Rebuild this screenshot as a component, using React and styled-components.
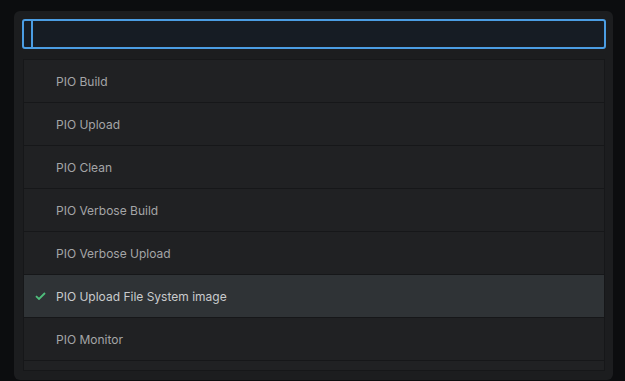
import styled, { createGlobalStyle } from "styled-components";

const GlobalStyle = createGlobalStyle`
  html, body {
    margin: 0;
    padding: 0;
    background: #0c0d0f;
    font-family: Inter, "Noto Sans", "Liberation Sans", sans-serif;
  }
`;

const Page = styled.div`
  width: 625px;
  height: 381px;
  padding: 11px 0 0 14px;
  box-sizing: border-box;
`;

const Panel = styled.div`
  width: 599px;
  height: 369px;
  box-sizing: border-box;
  background: #1c1d1f;
  border-radius: 6px;
  padding: 8px 7px 9px 8px;
  display: flex;
  flex-direction: column;
  gap: 10px;
`;

const SearchBox = styled.div`
  height: 30px;
  box-sizing: border-box;
  border: 2px solid #4b9de3;
  border-radius: 3px;
  background: #161c24;
  display: flex;
  align-items: stretch;
  padding: 0 0 0 7px;
`;

const Caret = styled.span`
  width: 2px;
  background: #4b9de3;
`;

const List = styled.ul`
  list-style: none;
  margin: 0 1px 0 1px;
  padding: 0;
  flex: 1;
  overflow: hidden;
  border: 1px solid #161719;
  border-top-color: #17181a;
  background: #202123;
`;

const Row = styled.li`
  height: 42px;
  flex-shrink: 0;
  border-bottom: 1px solid #161719;
  display: flex;
  align-items: center;
  background: ${(p) => (p.$selected ? "#2f3336" : "#202123")};
  color: ${(p) => (p.$selected ? "#c9cbcd" : "#a4a5a7")};
  font-size: 12px;
`;

const Mark = styled.span`
  width: 32px;
  display: flex;
  justify-content: flex-end;
  padding-right: 10px;
  box-sizing: border-box;
  align-items: center;
`;

const items = [
  "PIO Build",
  "PIO Upload",
  "PIO Clean",
  "PIO Verbose Build",
  "PIO Verbose Upload",
  "PIO Upload File System image",
  "PIO Monitor",
  "",
];

function Check() {
  return (
    <svg width="11" height="8" viewBox="0 0 11 8">
      <path d="M1 4.2 L4 7 L10 1" fill="none" stroke="#4fbf7c" strokeWidth="1.8" />
    </svg>
  );
}

export default function App() {
  return (
    <Page>
      <GlobalStyle />
      <Panel>
        <SearchBox>
          <Caret />
        </SearchBox>
        <List>
          {items.map((t, i) => (
            <Row key={i} $selected={i === 5}>
              <Mark>{i === 5 && <Check />}</Mark>
              {t}
            </Row>
          ))}
        </List>
      </Panel>
    </Page>
  );
}
